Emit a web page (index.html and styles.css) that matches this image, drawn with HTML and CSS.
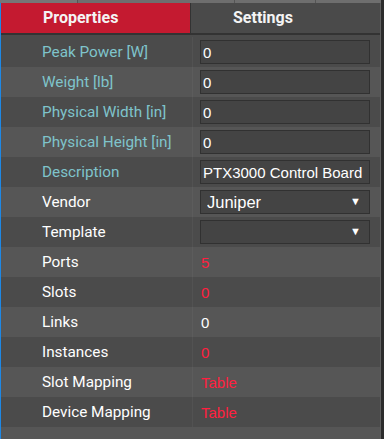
FILE: index.html
```html
<!DOCTYPE html>
<html lang="en">
<head>
    <meta charset="UTF-8">
    <meta name="viewport" content="width=device-width, initial-scale=1.0">
    <title>Properties</title>
    <link rel="stylesheet" href="styles.css">
</head>
<body>
    <div class="top-strip">
        <span class="seg seg-a"></span>
        <span class="seg seg-b"></span>
        <span class="seg seg-c"></span>
        <span class="seg seg-d"></span>
    </div>
    <div class="panel">
        <div class="tabs">
            <div class="tab active">Properties</div>
            <div class="tab">Settings</div>
        </div>
        <div class="rows">
            <div class="row">
                <div class="label hint">Peak Power [W]</div>
                <div class="value"><input type="text" class="field" value="0"></div>
            </div>
            <div class="row">
                <div class="label hint">Weight [lb]</div>
                <div class="value"><input type="text" class="field" value="0"></div>
            </div>
            <div class="row">
                <div class="label hint">Physical Width [in]</div>
                <div class="value"><input type="text" class="field" value="0"></div>
            </div>
            <div class="row">
                <div class="label hint">Physical Height [in]</div>
                <div class="value"><input type="text" class="field" value="0"></div>
            </div>
            <div class="row">
                <div class="label hint">Description</div>
                <div class="value"><input type="text" class="field" value="PTX3000 Control Board"></div>
            </div>
            <div class="row">
                <div class="label">Vendor</div>
                <div class="value">
                    <div class="select-wrap">
                        <select class="field select">
                            <option>Juniper</option>
                        </select>
                        <span class="arrow">&#9660;</span>
                    </div>
                </div>
            </div>
            <div class="row">
                <div class="label">Template</div>
                <div class="value">
                    <div class="select-wrap">
                        <select class="field select">
                            <option></option>
                        </select>
                        <span class="arrow">&#9660;</span>
                    </div>
                </div>
            </div>
            <div class="row">
                <div class="label">Ports</div>
                <div class="value"><span class="text red">5</span></div>
            </div>
            <div class="row">
                <div class="label">Slots</div>
                <div class="value"><span class="text red">0</span></div>
            </div>
            <div class="row">
                <div class="label">Links</div>
                <div class="value"><span class="text">0</span></div>
            </div>
            <div class="row">
                <div class="label">Instances</div>
                <div class="value"><span class="text red">0</span></div>
            </div>
            <div class="row">
                <div class="label">Slot Mapping</div>
                <div class="value"><span class="text red">Table</span></div>
            </div>
            <div class="row">
                <div class="label">Device Mapping</div>
                <div class="value"><span class="text red">Table</span></div>
            </div>
        </div>
    </div>
</body>
</html>
```

FILE: styles.css
```css
html, body {
    margin: 0;
    height: 100%;
}
body {
    background-color: #2c2c2c;
    font-family: Roboto, 'Liberation Sans', sans-serif;
    color: #fff;
    display: flex;
    flex-direction: column;
    width: 381px;
    overflow: hidden;
}
.top-strip {
    display: flex;
    height: 3px;
    background-color: #6e6e6e;
}
.seg {
    border-right: 1px solid #555;
}
.seg-a { width: 77px; background-color: #767676; }
.seg-b { width: 156px; }
.seg-c { width: 80px; }
.seg-d { flex: 1; border-right: none; }
.panel {
    flex: 1;
    display: flex;
    flex-direction: column;
    background-color: #565656;
    border-left: 1px solid #1e88e5;
    border-right: 1px solid #5f5f5f;
}
.tabs {
    display: flex;
    height: 30px;
    border-bottom: 2px solid #333;
}
.tab {
    flex: 1;
    padding-left: 42px;
    line-height: 30px;
    font-size: 16px;
    font-weight: bold;
    background-color: #4a4a4a;
    color: #f4f4f4;
}
.tab.active {
    flex: 0 0 147px;
    background-color: #c41a30;
    border-right: 1px solid #333;
}
.rows {
    display: flex;
    flex-direction: column;
}
.row {
    display: flex;
    height: 30px;
    background-color: #565656;
}
.row:nth-child(odd) {
    background-color: #4b4b4b;
}
.row:first-child {
    padding-top: 2px;
}
.label {
    width: 150px;
    padding-left: 41px;
    font-size: 15.3px;
    line-height: 30px;
    color: #fff;
}
.label.hint {
    color: #7fc4cb;
}
.value {
    flex: 1;
    display: flex;
    align-items: center;
    padding-left: 7px;
    border-left: 1px solid rgba(255, 255, 255, 0.04);
}
.field {
    box-sizing: border-box;
    width: 170px;
    height: 24px;
    margin: 0;
    padding: 0 2px;
    background-color: #444;
    border: 1px solid #313131;
    color: #fff;
    font-family: 'Liberation Sans', Arial, sans-serif;
    font-size: 15px;
    outline: none;
}
.select-wrap {
    position: relative;
}
.select {
    appearance: none;
    -webkit-appearance: none;
    padding-left: 6px;
    font-size: 16.5px;
    display: block;
}
.arrow {
    position: absolute;
    right: 9px;
    top: 5px;
    font-size: 11px;
    color: #fff;
    pointer-events: none;
}
.text {
    padding-left: 1px;
    font-family: 'Liberation Sans', Arial, sans-serif;
    font-size: 15px;
    color: #fff;
}
.text.red {
    color: #ff1f3f;
}
```
